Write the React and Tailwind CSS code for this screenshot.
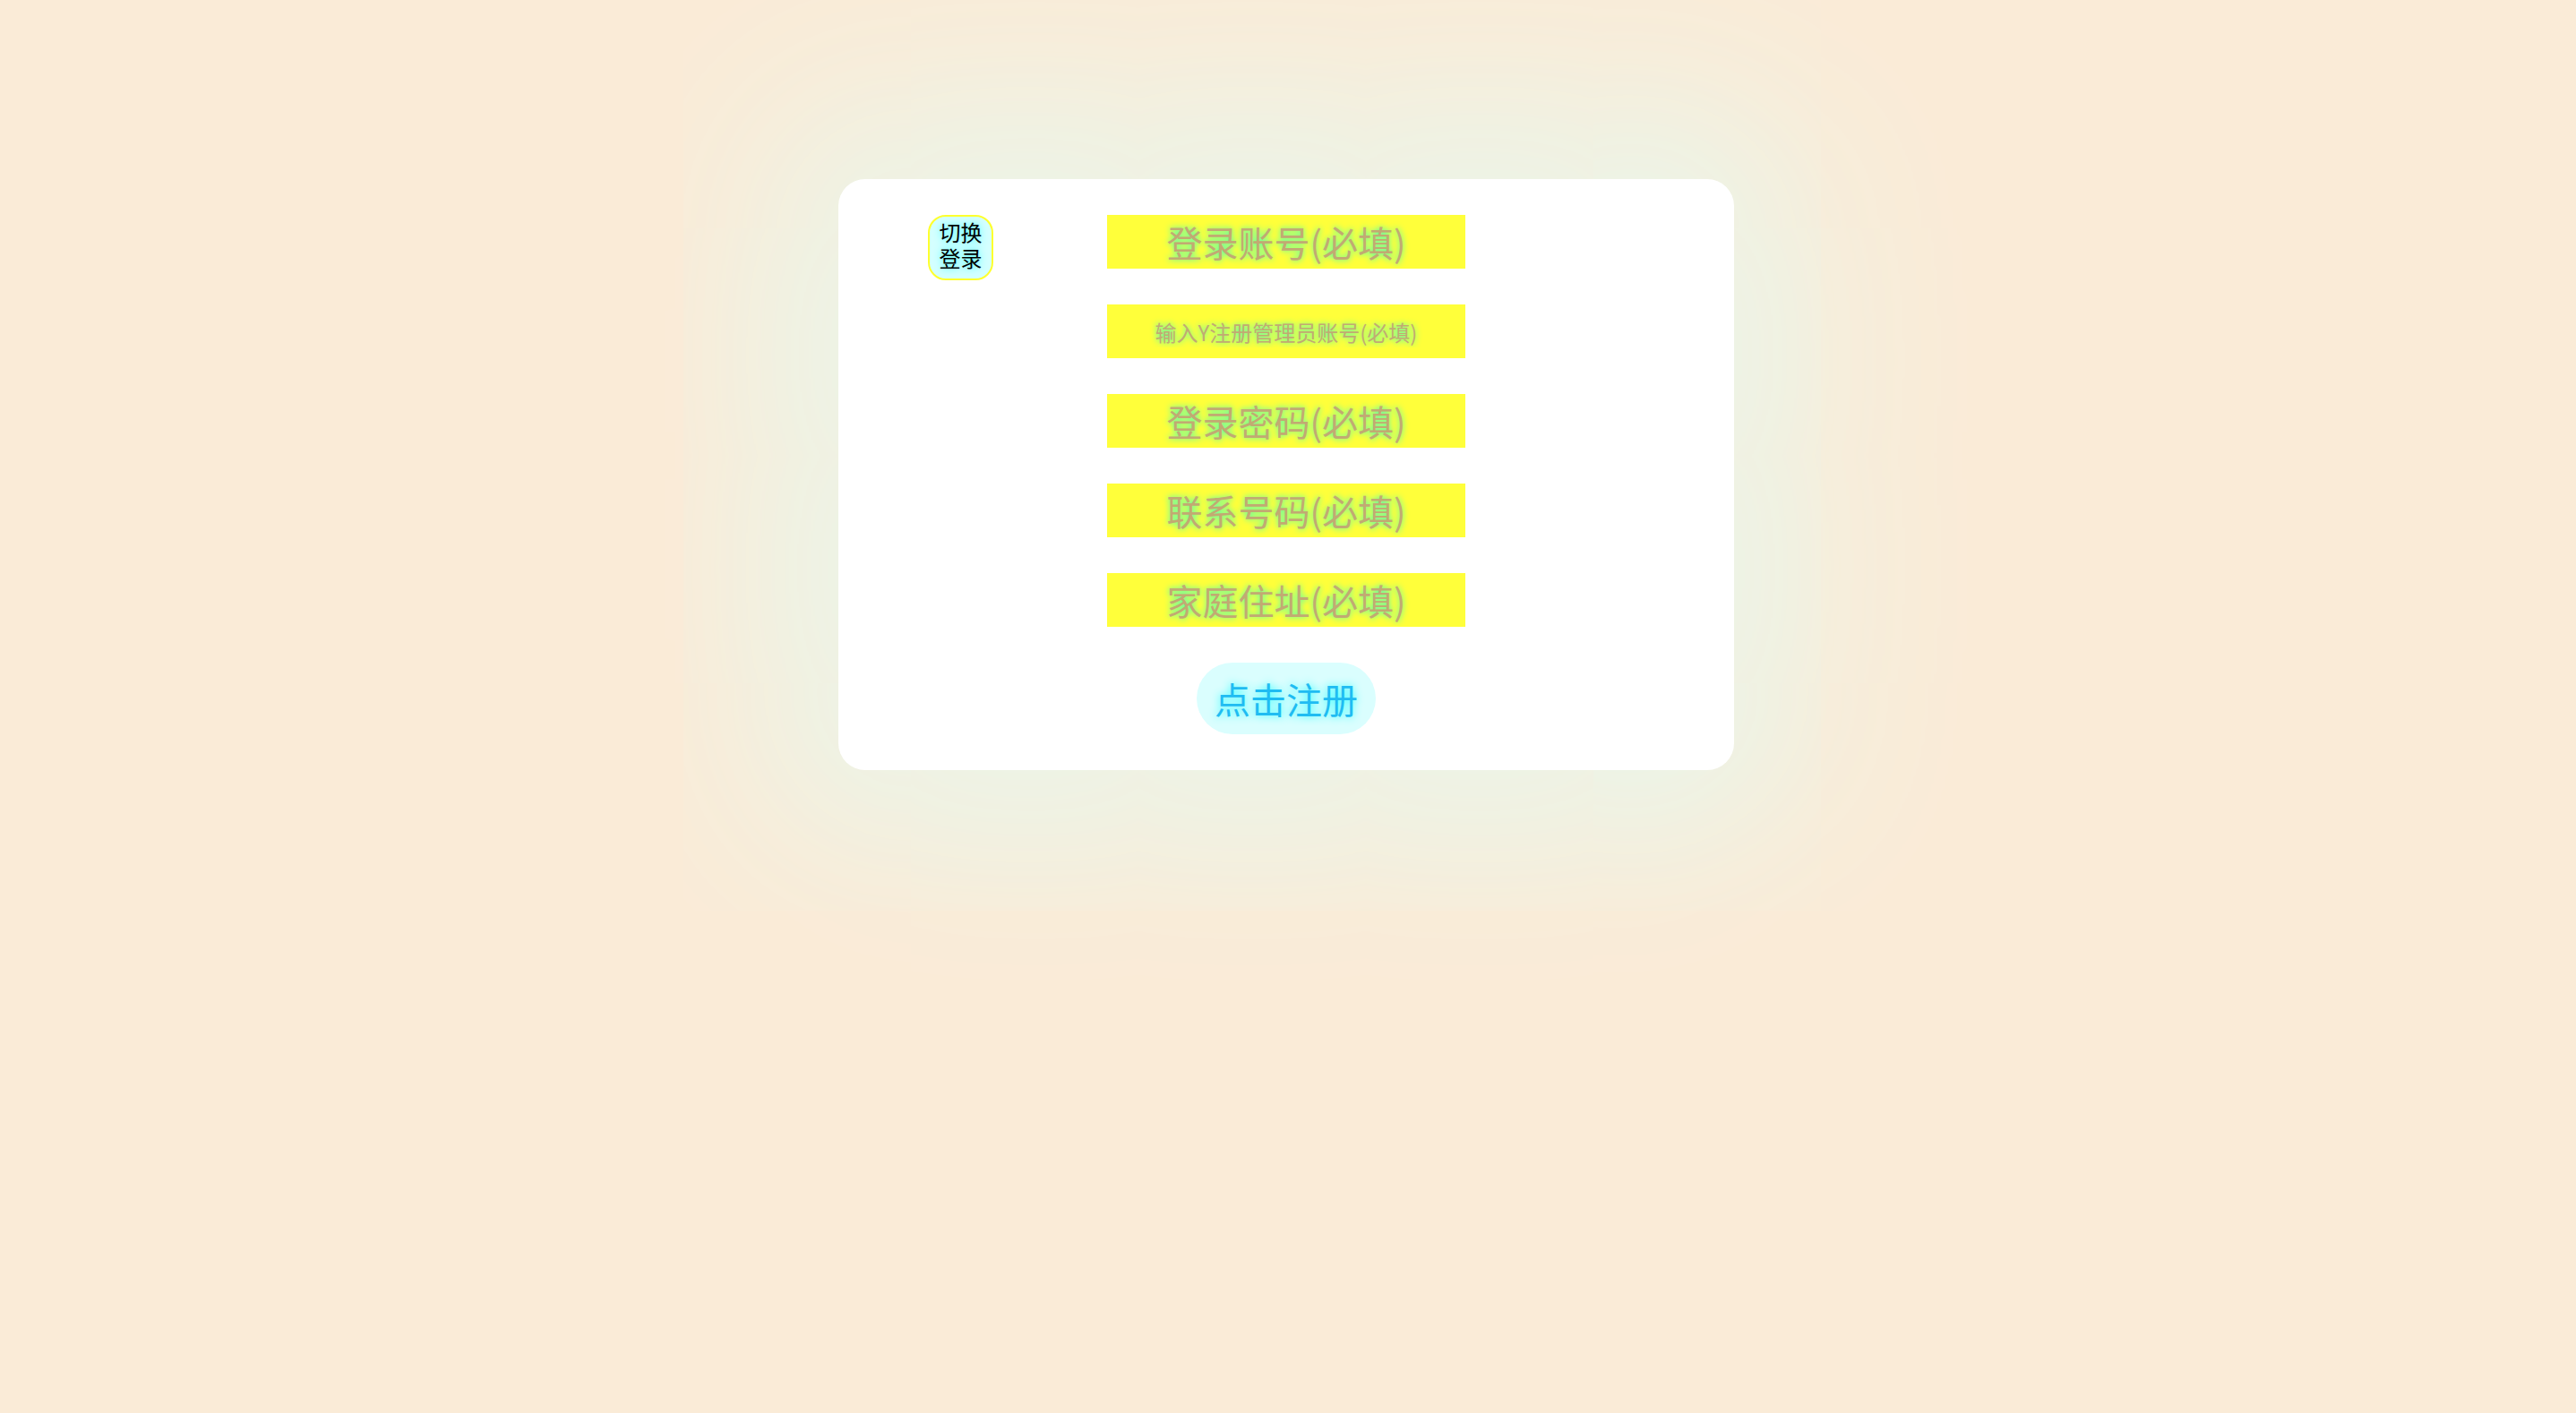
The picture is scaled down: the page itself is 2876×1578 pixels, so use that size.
import { useState } from 'react'

const fields = [
  { key: 'account', ph: '登录账号(必填)', size: 'big' },
  { key: 'admin', ph: '输入Y注册管理员账号(必填)', size: 'small' },
  { key: 'password', ph: '登录密码(必填)', size: 'big', type: 'password' },
  { key: 'phone', ph: '联系号码(必填)', size: 'big' },
  { key: 'address', ph: '家庭住址(必填)', size: 'big' },
]

const inputBase =
  'col-start-2 h-[60px] w-[400px] bg-[#ffff3a] text-center outline-none text-[#8f8f5a] placeholder:text-[#c2aa72] placeholder:[text-shadow:0_0_7px_#2effc8]'

export default function App() {
  const [form, setForm] = useState({})

  function onChange(key, value) {
    setForm(f => ({ ...f, [key]: value }))
  }

  return (
    <div className="min-h-[1578px] bg-[#faebd7] pt-[200px] font-['Noto_Sans_CJK_SC','Noto_Sans',sans-serif]">
      <div className="ml-[936px] w-[1000px] rounded-[30px] bg-white py-10 shadow-[0_0_220px_60px_#e6f8ee]">
        <form
          onSubmit={e => e.preventDefault()}
          className="grid grid-cols-[1fr_400px_1fr] gap-y-10"
        >
          <button
            type="button"
            className="col-start-1 row-span-2 row-start-1 ml-[100px] h-[73px] w-[73px] self-start justify-self-start rounded-[20px] border-2 border-[#ffff2e] bg-[#d4ffff] pb-2 text-[24px] leading-[29px] text-black [text-shadow:0_0_8px_#3ff]"
          >
            切换<br />登录
          </button>

          {fields.map((f, i) => (
            <input
              key={f.key}
              type={f.type || 'text'}
              placeholder={f.ph}
              value={form[f.key] || ''}
              onChange={e => onChange(f.key, e.target.value)}
              className={
                inputBase +
                (f.size === 'big' ? ' text-[40px]' : ' text-[24px]') +
                (i === 0 ? ' row-start-1' : '')
              }
            />
          ))}

          <button
            type="submit"
            className="col-start-2 h-20 w-[200px] justify-self-center rounded-full bg-[#dafefe] text-[40px] text-[#1fbcf2] [text-shadow:0_0_10px_#2ff]"
          >
            点击注册
          </button>
        </form>
      </div>
    </div>
  )
}
